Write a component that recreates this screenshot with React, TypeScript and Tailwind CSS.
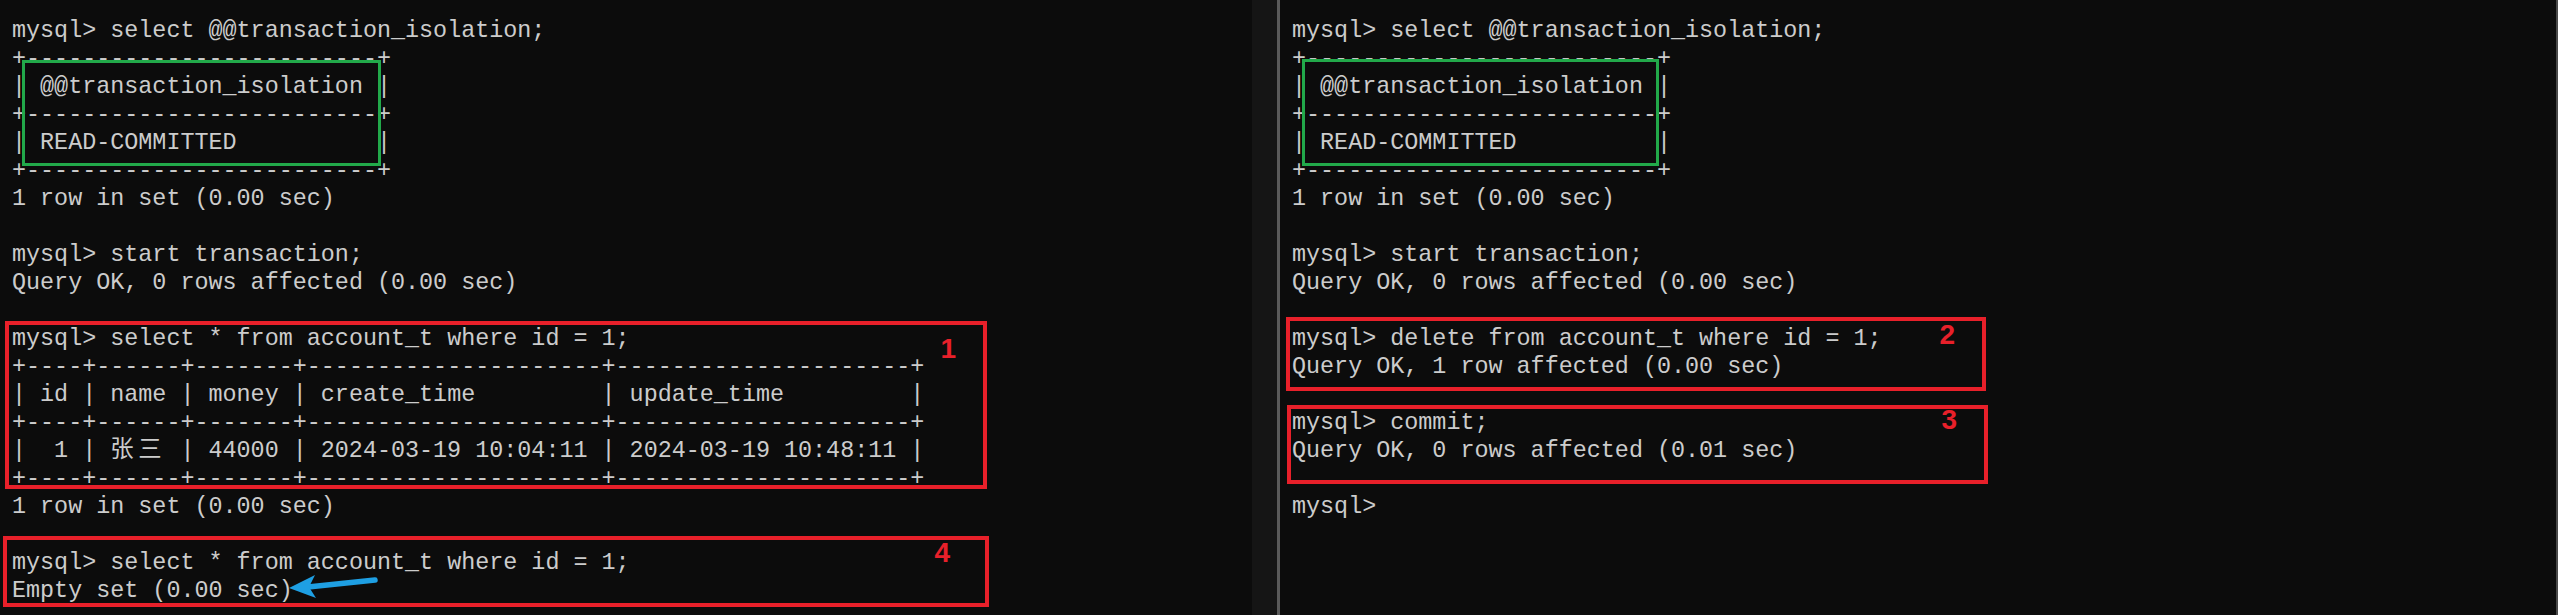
import type { ReactNode } from "react";

const isoTable = [
  "+-------------------------+",
  "| @@transaction_isolation |",
  "+-------------------------+",
  "| READ-COMMITTED          |",
  "+-------------------------+",
];

const sep = "+----+------+-------+---------------------+---------------------+";

const Line = ({ text }: { text: string }) => (
  <div className="h-[28px] leading-[28px] whitespace-pre">{text}</div>
);

const Lines = ({ lines }: { lines: string[] }) => (
  <>
    {lines.map((l, i) => (
      <Line key={i} text={l} />
    ))}
  </>
);

// the CJK chars take two terminal cells each
const DataRow = () => (
  <div className="h-[28px] leading-[28px] whitespace-pre">
    {"|  1 | "}
    <span className="inline-block w-[2ch]">张</span>
    <span className="inline-block w-[2ch]">三</span>
    {" | 44000 | 2024-03-19 10:04:11 | 2024-03-19 10:48:11 |"}
  </div>
);

const IsoBlock = ({ boxClass }: { boxClass: string }) => (
  <div className="relative">
    <Lines lines={isoTable} />
    <div className={`absolute border-[3px] border-[#22a94a] ${boxClass}`} />
  </div>
);

const RedBox = ({
  n,
  className,
  innerClass,
  tagClass,
  children,
}: {
  n: string;
  className: string;
  innerClass: string;
  tagClass: string;
  children: ReactNode;
}) => (
  <div className={`relative flex items-start border-[4px] border-[#e8202a] ${className}`}>
    <div className={`flex-1 ${innerClass}`}>{children}</div>
    <div
      className={`text-[28px] leading-[28px] font-bold text-[#e8202a] font-['Liberation_Sans',sans-serif] ${tagClass}`}
    >
      {n}
    </div>
  </div>
);

const Pane = ({ children }: { children: ReactNode }) => (
  <div className="h-full pt-[17px] pl-[12px] text-[#cccccc] text-[23.4px] font-['Liberation_Mono','Noto_Sans_CJK_SC',monospace]">
    {children}
  </div>
);

export default function App() {
  return (
    <div className="flex w-[2558px] h-[615px] overflow-hidden bg-[#0c0c0c]">
      {/* left session */}
      <div className="w-[1252px] shrink-0">
        <Pane>
          <Line text="mysql> select @@transaction_isolation;" />
          <IsoBlock boxClass="left-[10px] top-[15px] w-[359px] h-[106px]" />
          <Lines
            lines={[
              "1 row in set (0.00 sec)",
              "",
              "mysql> start transaction;",
              "Query OK, 0 rows affected (0.00 sec)",
            ]}
          />
          <RedBox
            n="1"
            className="w-[982px] h-[168px] -ml-[7px] mt-[24px] mb-[4px]"
            innerClass="pl-[3px]"
            tagClass="mt-[10px] mr-[27px]"
          >
            <Line text="mysql> select * from account_t where id = 1;" />
            <Line text={sep} />
            <Line text="| id | name | money | create_time         | update_time         |" />
            <Line text={sep} />
            <DataRow />
            <Line text={sep} />
          </RedBox>
          <Line text="1 row in set (0.00 sec)" />
          <RedBox
            n="4"
            className="w-[986px] h-[71px] -ml-[9px] mt-[15px]"
            innerClass="pl-[5px] pt-[9px]"
            tagClass="-mt-[1px] mr-[35px]"
          >
            <Line text="mysql> select * from account_t where id = 1;" />
            <Line text="Empty set (0.00 sec)" />
            <svg className="absolute left-[273px] top-[25px]" width="110" height="45" viewBox="0 0 110 45">
              <line x1="28" y1="22" x2="95" y2="15" stroke="#1e9fe3" strokeWidth="5.5" strokeLinecap="round" />
              <polygon points="9,23 35,10 29,22 36,33" fill="#1e9fe3" />
            </svg>
          </RedBox>
        </Pane>
      </div>

      <div className="w-[25px] shrink-0 bg-[#151515]" />
      <div className="w-[3px] shrink-0 bg-[#5a5a5a]" />

      {/* right session */}
      <div className="flex-1">
        <Pane>
          <Line text="mysql> select @@transaction_isolation;" />
          <IsoBlock boxClass="left-[10px] top-[14px] w-[357px] h-[107px]" />
          <Lines
            lines={[
              "1 row in set (0.00 sec)",
              "",
              "mysql> start transaction;",
              "Query OK, 0 rows affected (0.00 sec)",
            ]}
          />
          <RedBox
            n="2"
            className="w-[700px] h-[74px] -ml-[6px] mt-[20px]"
            innerClass="pl-[2px] pt-[4px]"
            tagClass="mr-[27px]"
          >
            <Line text="mysql> delete from account_t where id = 1;" />
            <Line text="Query OK, 1 row affected (0.00 sec)" />
          </RedBox>
          <RedBox
            n="3"
            className="w-[701px] h-[79px] -ml-[5px] mt-[14px] mb-[9px]"
            innerClass="pl-[1px]"
            tagClass="-mt-[3px] mr-[27px]"
          >
            <Line text="mysql> commit;" />
            <Line text="Query OK, 0 rows affected (0.01 sec)" />
          </RedBox>
          <Line text="mysql>" />
        </Pane>
      </div>
      <div className="w-[2px] shrink-0 bg-[#4a4a4a]" />
    </div>
  );
}
